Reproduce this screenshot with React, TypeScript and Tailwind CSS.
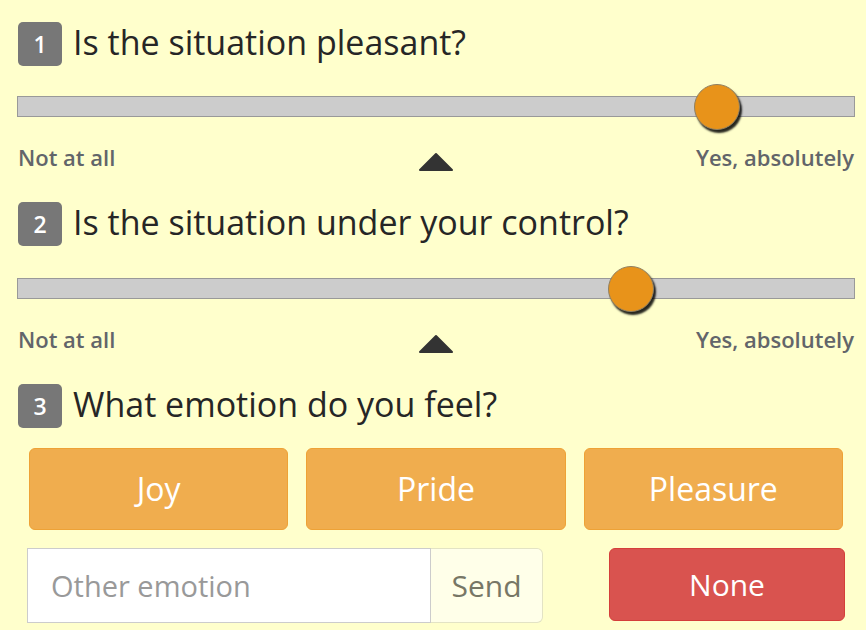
import React from "react";

const font = { fontFamily: '"Open Sans", "Noto Sans", sans-serif' };

function Triangle() {
  return (
    <svg width="36" height="20" viewBox="0 0 36 20" className="block">
      <polygon points="18,2 34,18 2,18" fill="#333333" stroke="#333333" strokeWidth="2" strokeLinejoin="round" />
    </svg>
  );
}

function Question({ n, text }: { n: number; text: string }) {
  return (
    <div className="flex items-center h-[44px]">
      <div className="ml-[1px] w-[44px] h-[44px] rounded-[5px] bg-[#777777] text-white flex items-center justify-center text-[23px] font-semibold">
        {n}
      </div>
      <div className="ml-[11px] -mt-[4px] text-[34px] leading-[44px] text-[#262626]">{text}</div>
    </div>
  );
}

function Slider({ pos }: { pos: number }) {
  return (
    <div className="relative h-[21px] bg-[#cccccc] border border-[#999999]">
      <div
        className="absolute top-1/2 w-[46px] h-[46px] -ml-[23px] -mt-[23px] rounded-full bg-[#e8931a] border border-[#8f8062] shadow-[2px_3px_2px_rgba(0,0,0,0.85)]"
        style={{ left: `${pos}px` }}
      />
    </div>
  );
}

function Labels() {
  return (
    <div className="relative flex items-center justify-between h-[24px] text-[22px] font-semibold text-[#62656a]">
      <span className="ml-[1px]">Not at all</span>
      <div className="absolute left-1/2 -translate-x-1/2 top-[7px]">
        <Triangle />
      </div>
      <span className="mr-[1px]">Yes, absolutely</span>
    </div>
  );
}

export default function App() {
  return (
    <div className="w-[866px] h-[630px] bg-[#ffffcc] overflow-hidden" style={font}>
      <div className="pl-[17px] pr-[11px]">
        <div className="pt-[22px]">
          <Question n={1} text="Is the situation pleasant?" />
        </div>
        <div className="mt-[30px]">
          <Slider pos={699} />
        </div>
        <div className="mt-[28px]">
          <Labels />
        </div>
        <div className="mt-[33px]">
          <Question n={2} text="Is the situation under your control?" />
        </div>
        <div className="mt-[32px]">
          <Slider pos={613} />
        </div>
        <div className="mt-[28px]">
          <Labels />
        </div>
        <div className="mt-[33px]">
          <Question n={3} text="What emotion do you feel?" />
        </div>
      </div>
      <div className="ml-[29px] w-[814px] mt-[20px] grid grid-cols-3 gap-[18px]">
        {["Joy", "Pride", "Pleasure"].map((t) => (
          <div
            key={t}
            className="h-[82px] rounded-[6px] bg-[#f0ad4e] border border-[#eea236] text-white text-[32px] flex items-center justify-center"
          >
            {t}
          </div>
        ))}
      </div>
      <div className="flex mt-[18px] ml-[27px]">
        <div className="flex h-[75px]">
          <div className="w-[404px] bg-white border border-[#cccccc] flex items-center pl-[23px] text-[29px] text-[#999999]">
            Other emotion
          </div>
          <div className="w-[112px] bg-[#ffffe9] border border-l-0 border-[#e3e3c4] rounded-r-[6px] flex items-center justify-center text-[30px] text-[#777766]">
            Send
          </div>
        </div>
        <div className="ml-[66px] w-[236px] h-[73px] rounded-[6px] bg-[#d9534f] border border-[#d43f3a] text-white text-[30px] flex items-center justify-center">
          None
        </div>
      </div>
    </div>
  );
}
